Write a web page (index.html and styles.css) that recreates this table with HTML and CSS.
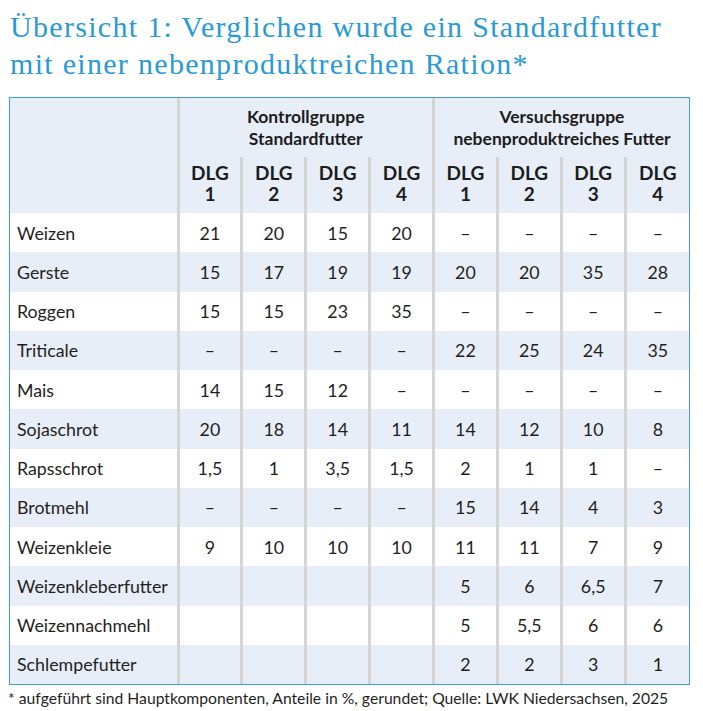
FILE: index.html
```html
<!DOCTYPE html>
<html lang="de">
<head>
<meta charset="utf-8">
<title>Übersicht 1</title>
<link rel="stylesheet" href="styles.css">
</head>
<body>
<h1 class="title">Übersicht 1: Verglichen wurde ein Standardfutter<br>mit einer nebenproduktreichen Ration*</h1>
<div class="frame">
<table class="ration">
<colgroup><col class="c-label"><col><col><col><col><col><col><col><col></colgroup>
<thead>
<tr class="h1">
<th rowspan="2" class="blank"></th>
<th colspan="4" class="grp">Kontrollgruppe<br>Standardfutter</th>
<th colspan="4" class="grp">Versuchsgruppe<br>nebenproduktreiches Futter</th>
</tr>
<tr class="h2">
<th>DLG<br>1</th><th>DLG<br>2</th><th>DLG<br>3</th><th>DLG<br>4</th>
<th>DLG<br>1</th><th>DLG<br>2</th><th>DLG<br>3</th><th>DLG<br>4</th>
</tr>
</thead>
<tbody>
<tr><th>Weizen</th><td>21</td><td>20</td><td>15</td><td>20</td><td>–</td><td>–</td><td>–</td><td>–</td></tr>
<tr><th>Gerste</th><td>15</td><td>17</td><td>19</td><td>19</td><td>20</td><td>20</td><td>35</td><td>28</td></tr>
<tr><th>Roggen</th><td>15</td><td>15</td><td>23</td><td>35</td><td>–</td><td>–</td><td>–</td><td>–</td></tr>
<tr><th>Triticale</th><td>–</td><td>–</td><td>–</td><td>–</td><td>22</td><td>25</td><td>24</td><td>35</td></tr>
<tr><th>Mais</th><td>14</td><td>15</td><td>12</td><td>–</td><td>–</td><td>–</td><td>–</td><td>–</td></tr>
<tr><th>Sojaschrot</th><td>20</td><td>18</td><td>14</td><td>11</td><td>14</td><td>12</td><td>10</td><td>8</td></tr>
<tr><th>Rapsschrot</th><td>1,5</td><td>1</td><td>3,5</td><td>1,5</td><td>2</td><td>1</td><td>1</td><td>–</td></tr>
<tr><th>Brotmehl</th><td>–</td><td>–</td><td>–</td><td>–</td><td>15</td><td>14</td><td>4</td><td>3</td></tr>
<tr><th>Weizenkleie</th><td>9</td><td>10</td><td>10</td><td>10</td><td>11</td><td>11</td><td>7</td><td>9</td></tr>
<tr><th>Weizenkleberfutter</th><td></td><td></td><td></td><td></td><td>5</td><td>6</td><td>6,5</td><td>7</td></tr>
<tr><th>Weizennachmehl</th><td></td><td></td><td></td><td></td><td>5</td><td>5,5</td><td>6</td><td>6</td></tr>
<tr><th>Schlempefutter</th><td></td><td></td><td></td><td></td><td>2</td><td>2</td><td>3</td><td>1</td></tr>
</tbody>
</table>
</div>
<p class="note">* aufgeführt sind Hauptkomponenten, Anteile in %, gerundet; Quelle: LWK Niedersachsen, 2025</p>
</body>
</html>
```
FILE: styles.css
```css
html, body {
  margin: 0;
  padding: 0;
  background: #ffffff;
}
body {
  font-family: Lato, "Liberation Sans", sans-serif;
  color: #1f1f1f;
}
.title {
  margin: 0;
  padding: 8px 0 0 10px;
  font-family: "Liberation Serif", serif;
  font-weight: normal;
  font-size: 30px;
  letter-spacing: 1.3px;
  line-height: 37px;
  color: #2b9ad4;
}
.frame {
  margin: 15px 0 0 9px;
  width: 679px;
  border: 1px solid #3fa2b8;
}
.ration {
  width: 679px;
  table-layout: fixed;
  border-collapse: collapse;
  font-size: 17.8px;
}
.c-label {
  width: 168px;
}
.ration th, .ration td {
  padding: 0;
  text-align: center;
  font-weight: normal;
}
.ration thead tr {
  background: #e7eef8;
}
.ration thead th {
  font-weight: bold;
  color: #1c1c1c;
}
.h1 {
  height: 59px;
}
.h1 .grp {
  font-size: 17.5px;
  line-height: 22px;
  border-left: 3px solid #d5d5d5;
  padding-top: 1px;
}
.h2 {
  height: 56px;
}
.h2 th {
  font-size: 19px;
  line-height: 21px;
  border-left: 3px solid #d5d5d5;
  padding-bottom: 4px;
}
.ration tbody tr {
  height: 39.25px;
}
.ration tbody tr:nth-child(even) {
  background: #e7eef8;
}
.ration tbody th {
  text-align: left;
  padding-left: 7px;
}
.ration tbody td {
  border-left: 3px solid #d5d5d5;
}
.note {
  margin: 3px 0 0 8px;
  font-size: 15.7px;
  line-height: 20px;
  color: #1f1f1f;
}
```
